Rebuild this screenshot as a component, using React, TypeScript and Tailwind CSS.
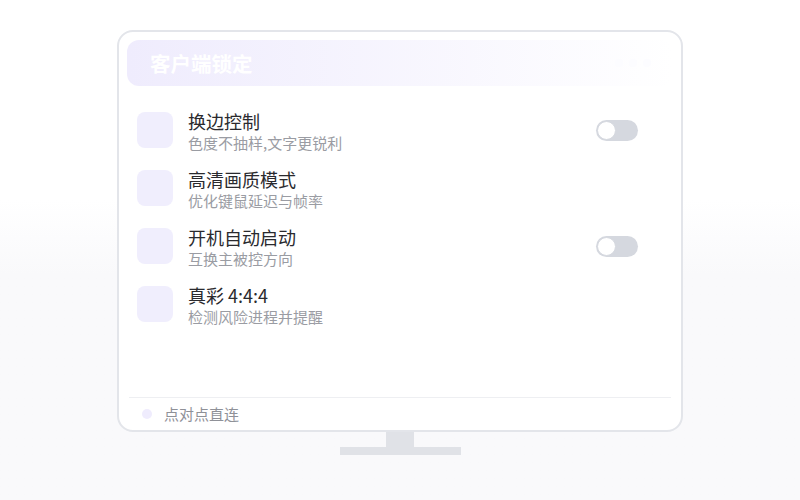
const rows = [
  { title: "换边控制", sub: "色度不抽样,文字更锐利", toggle: true },
  { title: "高清画质模式", sub: "优化键鼠延迟与帧率", toggle: false },
  { title: "开机自动启动", sub: "互换主被控方向", toggle: true },
  { title: "真彩 4:4:4", sub: "检测风险进程并提醒", toggle: false },
]

const Toggle = () => (
  <div className="w-[42px] h-[21px] rounded-full bg-[#d5d8df] p-[2px] flex items-center">
    <div className="w-[19px] h-[19px] -ml-[1px] rounded-full bg-white border border-[#d5d8df]"></div>
  </div>
)

export default function App() {
  return (
    <div className="w-[800px] h-[500px] bg-gradient-to-b from-white from-40% to-[#f9f9fb] to-55% flex flex-col items-center pt-[30px] font-['Noto_Sans_CJK_SC','Noto_Sans',sans-serif]">
      {/* monitor */}
      <div className="w-[566px] h-[402px] rounded-[16px] border-2 border-[#e3e5ea] bg-white flex flex-col px-[8px] pt-[8px]">
        {/* header */}
        <div className="h-[46px] rounded-[12px] bg-gradient-to-r from-[#efecfd] to-white flex items-center justify-between pl-[23px] pr-[22px]">
          <span className="text-white text-[20.5px] font-bold">客户端锁定</span>
          <div className="flex gap-[6px]">
            <span className="w-[8px] h-[8px] rounded-full bg-[#fcfcff]"></span>
            <span className="w-[8px] h-[8px] rounded-full bg-[#fcfcff]"></span>
            <span className="w-[8px] h-[8px] rounded-full bg-[#fcfcff]"></span>
          </div>
        </div>
        {/* rows */}
        <div className="flex flex-col gap-[22px] pt-[26px] pl-[10px] pr-[35px] flex-1">
          {rows.map((r) => (
            <div key={r.title} className="flex items-center h-[36px]">
              <div className="w-[36px] h-[36px] rounded-[8px] bg-[#f0eefd]"></div>
              <div className="ml-[15px] mt-[4px] flex flex-col flex-1">
                <span className="text-[18px] leading-[22px] text-[#2a2a2e]">{r.title}</span>
                <span className="text-[15px] leading-[22px] text-[#9a9ca3]">{r.sub}</span>
              </div>
              {r.toggle && <Toggle />}
            </div>
          ))}
        </div>
        {/* footer */}
        <div className="mx-[2px] border-t border-[#eeeff2] h-[33px] flex items-center pl-[13px]">
          <span className="w-[10px] h-[10px] rounded-full bg-[#efecfd]"></span>
          <span className="ml-[12px] text-[15px] text-[#8f9198]">点对点直连</span>
        </div>
      </div>
      {/* stand */}
      <div className="w-[28px] h-[15px] bg-[#e0e2e7]"></div>
      <div className="w-[121px] h-[8px] bg-[#e0e2e7]"></div>
    </div>
  )
}
